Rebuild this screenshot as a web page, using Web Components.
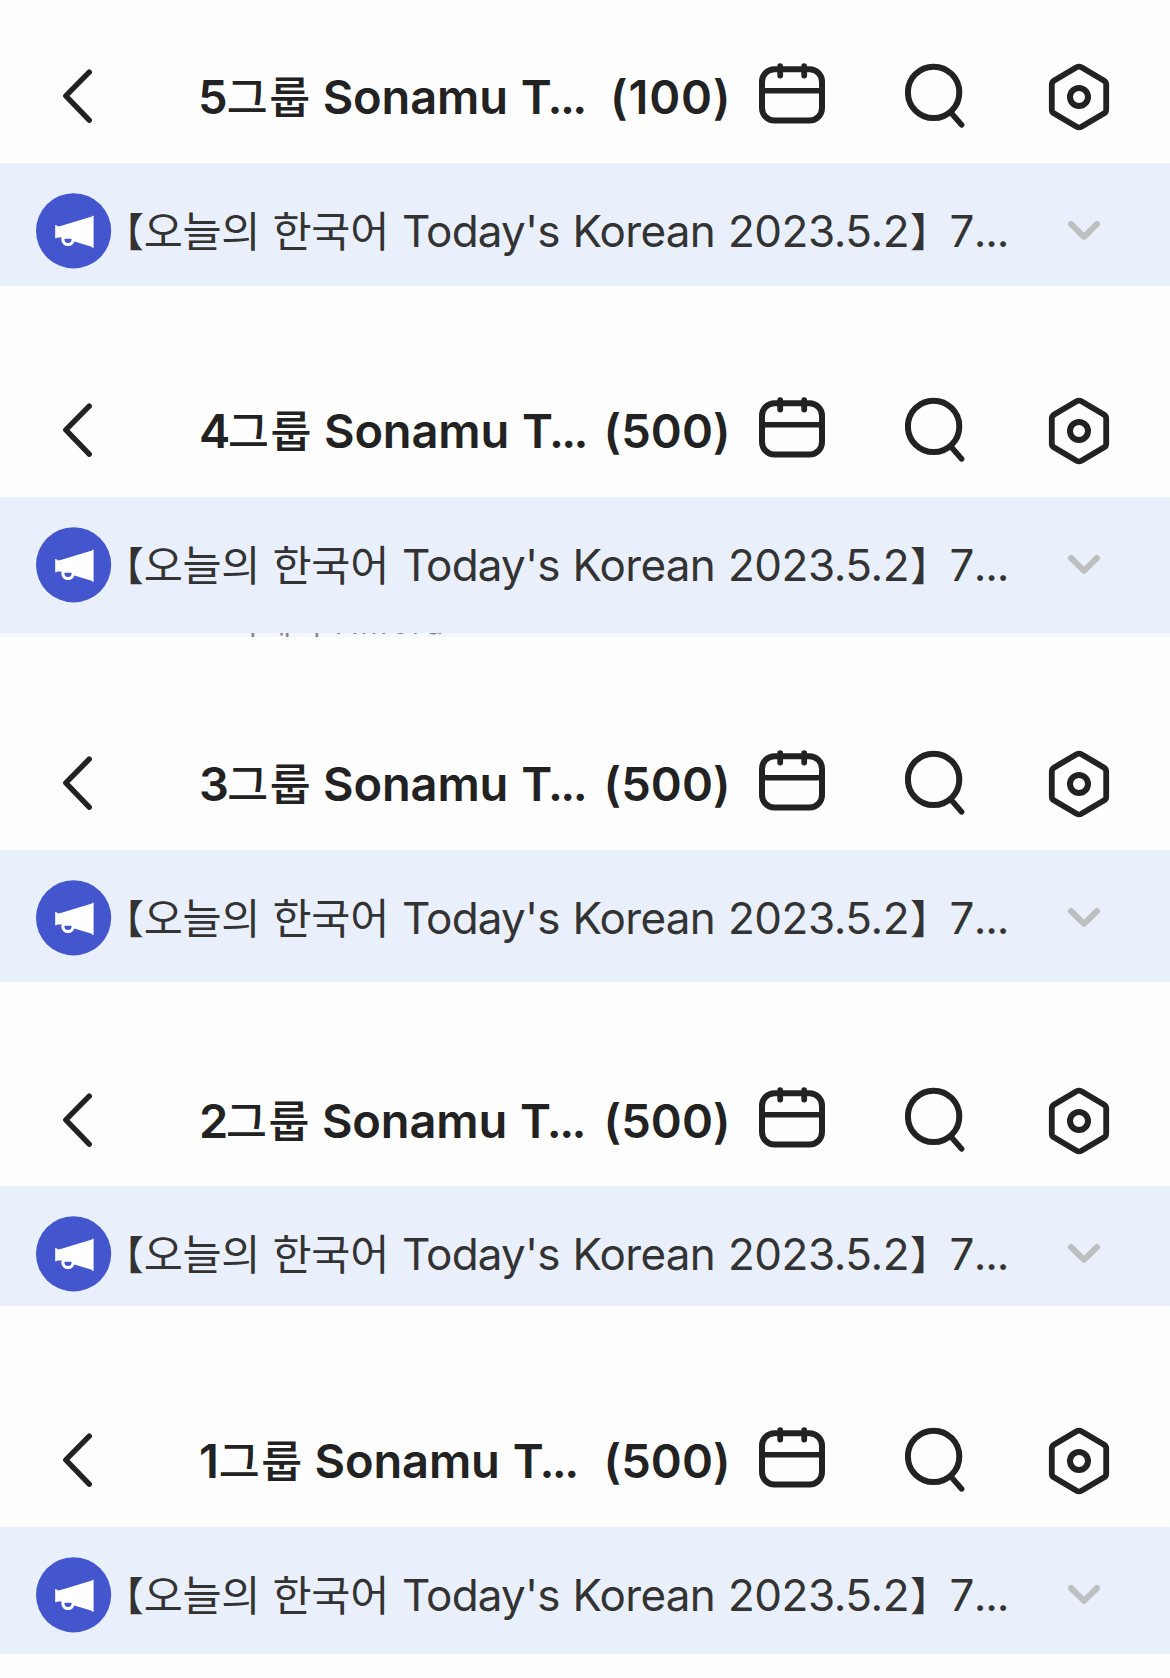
<!DOCTYPE html>
<html lang="ko">
<head>
<meta charset="utf-8">
<title>Sonamu Talk</title>
<style>
  html, body { margin: 0; padding: 0; background: #fefefe; }
  body { width: 1170px; height: 1678px; overflow: hidden; font-family: Inter, "Noto Sans CJK KR", sans-serif; }
</style>
</head>
<body>
<chat-list></chat-list>
<script>
const FAMILY = 'Inter, "Noto Sans CJK KR", sans-serif';
const pen = document.createElement('canvas').getContext('2d');

/* A word whose visible ink spans exactly `ink` pixels, `gap` pixels after the previous one. */
class InkWord extends HTMLElement {
  connectedCallback() {
    const text = this.textContent.trim();
    const size = +this.getAttribute('size'), weight = this.getAttribute('weight');
    const ink = +this.getAttribute('ink'), gap = +this.getAttribute('gap') || 0;
    pen.font = `${weight} ${size}px ${FAMILY}`;
    const m = pen.measureText(text);
    const natural = m.actualBoundingBoxLeft + m.actualBoundingBoxRight;
    const n = [...text].length;
    const spacing = n > 1 ? (ink - natural) / (n - 1) : 0;
    this.attachShadow({ mode: 'open' }).innerHTML = `
      <style>
        :host { display: block; flex: none; width: ${ink}px; margin-left: ${gap}px; }
        span { display: block; width: max-content; white-space: pre; font: ${weight} ${size}px/60px ${FAMILY};
               letter-spacing: ${spacing}px; margin-left: ${m.actualBoundingBoxLeft}px; }
      </style><span><slot></slot></span>`;
  }
}
customElements.define('ink-word', InkWord);

const ICONS = {
  back: ['30 54', 30, 54, '<path d="M27.2 3.2 3.8 26.8 27.2 51.2" stroke-width="5.4"/>'],
  calendar: ['66 62', 66, 62, '<rect x="3" y="6.2" width="60" height="51.4" rx="12.5" stroke-width="6"/><path d="M4 27.8h58" stroke-width="5.4" stroke-linecap="butt"/><path d="M21.2 3.2v9.3M45.2 3.2v9.3" stroke-width="5.8"/>'],
  search: ['60 66', 60, 66, '<circle cx="28.6" cy="29.4" r="25.7" stroke-width="6"/><path d="M46.6 50.4 56.6 61.9" stroke-width="5.6"/>'],
  settings: ['62 68', 62, 68, '<path d="M28.6 4.3Q31 3 33.4 4.3L55.8 17.4Q58.2 18.8 58.2 21.6V46.4Q58.2 49.2 55.8 50.6L33.4 63.7Q31 65 28.6 63.7L6.2 50.6Q3.8 49.2 3.8 46.4V21.6Q3.8 18.8 6.2 17.4Z" stroke-width="5.8"/><circle cx="31" cy="34" r="9" stroke-width="6"/>'],
  expand: ['34 22', 34, 22, '<path d="M4 4 17 16.8 30 4" stroke-width="6"/>']
};
class UiIcon extends HTMLElement {
  connectedCallback() {
    const [box, w, h, body] = ICONS[this.getAttribute('name')];
    this.attachShadow({ mode: 'open' }).innerHTML = `
      <style>:host { display: block; flex: none; width: ${w}px; height: ${h}px; } svg { display: block; }</style>
      <svg width="${w}" height="${h}" viewBox="0 0 ${box}" fill="none" stroke="currentColor" stroke-linecap="round" stroke-linejoin="round">${body}</svg>`;
  }
}
customElements.define('ui-icon', UiIcon);

class NoticeBadge extends HTMLElement {
  connectedCallback() {
    this.attachShadow({ mode: 'open' }).innerHTML = `
      <style>:host { display: block; flex: none; width: 76px; height: 76px; } svg { display: block; }</style>
      <svg width="76" height="76" viewBox="0 0 76 76">
        <circle cx="37.6" cy="37.8" r="37.6" fill="#4456cd"/>
        <circle cx="32" cy="46.4" r="5.1" fill="none" stroke="#fff" stroke-width="3.2"/>
        <path d="M19.2 32h1.2l.6 1.2h2.8L56 23.6l.5-.9h1.1v32h-1.3l-.6-1L37.6 48.2 36 46h-8.2l-2-1.4h-4.4l-1 .7h-1.2z" fill="#fff"/>
        <path d="M28.7 45.7h6.7q-.2 3.4-3.4 3.4t-3.3-3.4z" fill="#4456cd"/>
      </svg>`;
  }
}
customElements.define('notice-badge', NoticeBadge);

class ChatHeader extends HTMLElement {
  connectedCallback() {
    const a = n => this.getAttribute(n);
    const foot = a('foot') || 134;
    this.attachShadow({ mode: 'open' }).innerHTML = `
      <style>
        :host { display: flex; align-items: flex-end; height: ${a('height')}px; color: #222; }
        .bar { display: flex; align-items: center; width: 1170px; height: ${foot}px; }
        .back { margin-left: 62px; }
        .title { display: flex; align-items: baseline; width: 526px; height: 60px; margin: 2px 0 0 109px; }
        .count { flex: 1; display: flex; justify-content: flex-end; }
        .cal { margin: -4px 0 0 31.5px; }
        .find { margin: 0 0 0 80.7px; }
        .set { margin: 1px 0 0 83px; }
      </style>
      <div class="bar">
        <ui-icon class="back" name="back"></ui-icon>
        <div class="title">
          <ink-word size="47" weight="600" ink="${a('digit-width')}">${a('digit')}</ink-word>
          <ink-word size="44.5" weight="500" ink="79.5" gap="${a('gap')}">그룹 </ink-word>
          <ink-word size="47" weight="600" ink="180.5" gap="16.4">Sonamu </ink-word>
          <ink-word size="47" weight="600" ink="62.5" gap="16.6">T... </ink-word>
          <div class="count"><ink-word size="47" weight="600" ink="${a('count-width')}">(${a('count')})</ink-word></div>
        </div>
        <ui-icon class="cal" name="calendar"></ui-icon>
        <ui-icon class="find" name="search"></ui-icon>
        <ui-icon class="set" name="settings"></ui-icon>
      </div>`;
  }
}
customElements.define('chat-header', ChatHeader);

class NoticeBar extends HTMLElement {
  connectedCallback() {
    this.attachShadow({ mode: 'open' }).innerHTML = `
      <style>
        :host { display: block; height: ${this.getAttribute('height')}px; background: #e9f0fb; color: #333; overflow: hidden; }
        .row { display: flex; align-items: center; height: 135px; padding-left: 36px; }
        .text { display: flex; align-items: baseline; width: 878px; height: 60px; margin-left: 18px; }
        ui-icon { margin: 1px 0 0 58.5px; color: #bebfc1; }
      </style>
      <div class="row">
        <notice-badge></notice-badge>
        <div class="text">
          <ink-word size="40" weight="400" ink="13.5">【</ink-word>
          <ink-word size="42.5" weight="400" ink="109.5" gap="2.2">오늘의 </ink-word>
          <ink-word size="42.5" weight="400" ink="109.8" gap="19.2">한국어 </ink-word>
          <ink-word size="44" weight="400" ink="155.3" gap="19.8">Today's </ink-word>
          <ink-word size="44" weight="400" ink="137.3" gap="16.2">Korean </ink-word>
          <ink-word size="44" weight="400" ink="175.7" gap="18.2">2023.5.2</ink-word>
          <ink-word size="40" weight="400" ink="14" gap="4.3">】</ink-word>
          <ink-word size="44" weight="400" ink="22" gap="26.7">7</ink-word>
          <ink-word size="44" weight="400" ink="30" gap="3.2">...</ink-word>
        </div>
        <ui-icon name="expand"></ui-icon>
      </div>`;
  }
}
customElements.define('notice-bar', NoticeBar);

/* The sliver of the message author's name left visible under the notice. */
class AuthorPeek extends HTMLElement {
  connectedCallback() {
    this.attachShadow({ mode: 'open' }).innerHTML = `
      <style>
        :host { display: flex; align-items: flex-end; height: 4px; overflow: hidden; background: #f4f7fc; color: #85878c; padding-left: 232px; }
        .name { display: flex; align-items: baseline; margin-bottom: -16px; }
      </style>
      <div class="name"><ink-word size="31" weight="400" ink="91">아메라 </ink-word><ink-word size="31" weight="400" ink="106" gap="13">Amera</ink-word></div>`;
  }
}
customElements.define('author-peek', AuthorPeek);

class ChatList extends HTMLElement {
  connectedCallback() {
    this.attachShadow({ mode: 'open' }).innerHTML = `
      <style>:host { display: flex; flex-direction: column; }</style>
      <chat-header height="163" digit="5" digit-width="25.5" gap="2.3" count="100" count-width="113"></chat-header>
      <notice-bar height="123"></notice-bar>
      <chat-header height="211" digit="4" digit-width="26.5" gap="2.6" count="500" count-width="119.5"></chat-header>
      <notice-bar height="136"></notice-bar>
      <author-peek></author-peek>
      <chat-header height="213" digit="3" digit-width="25.5" gap="2.7" count="500" count-width="119.5"></chat-header>
      <notice-bar height="132"></notice-bar>
      <chat-header height="204" foot="132" digit="2" digit-width="25" gap="2" count="500" count-width="119.5"></chat-header>
      <notice-bar height="120"></notice-bar>
      <chat-header height="221" digit="1" digit-width="16.5" gap="3.2" count="500" count-width="119.5"></chat-header>
      <notice-bar height="127"></notice-bar>`;
  }
}
customElements.define('chat-list', ChatList);
</script>
</body>
</html>
